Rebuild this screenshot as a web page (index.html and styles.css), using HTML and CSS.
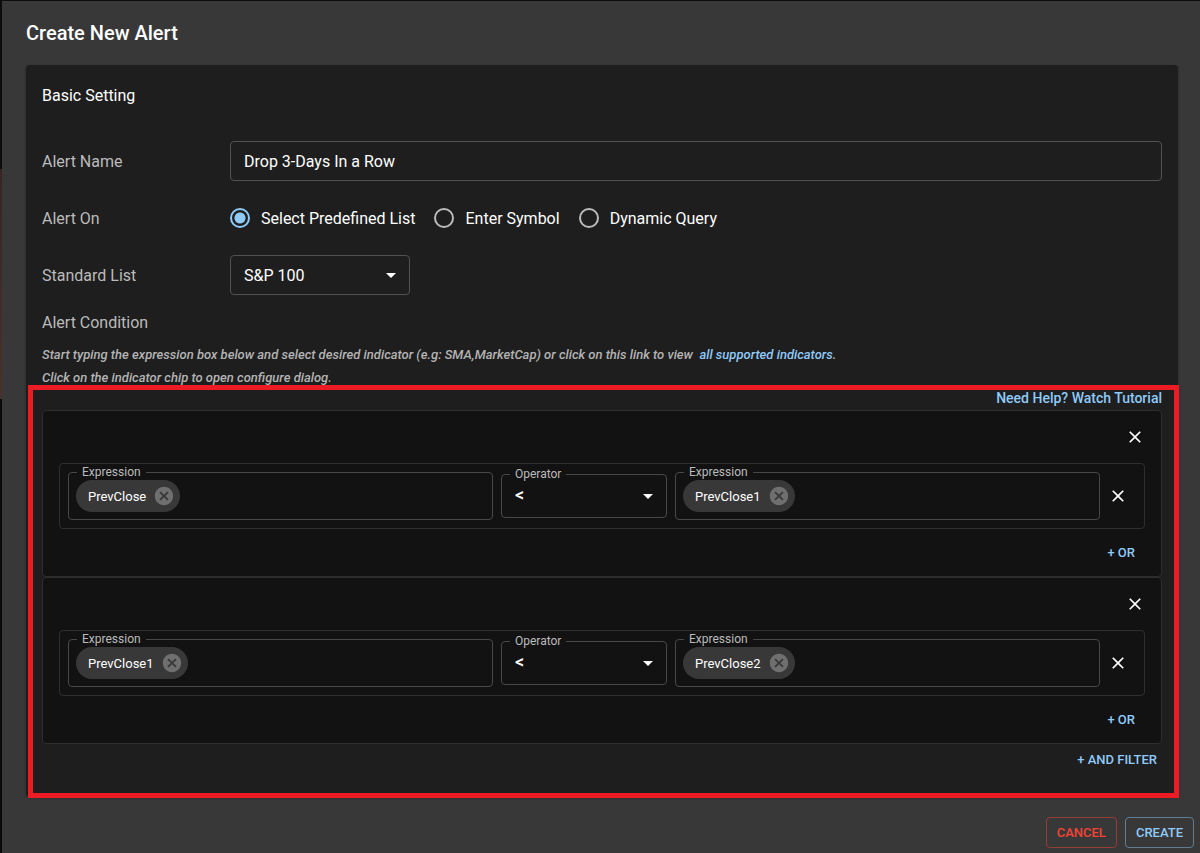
FILE: index.html
```html
<!DOCTYPE html>
<html lang="en">
<head>
  <meta charset="UTF-8" />
  <title>Create New Alert</title>
  <meta name="viewport" content="width=device-width, initial-scale=1.0"/>
  <link rel="stylesheet" href="styles.css">
</head>
<body>
  <form class="dialog">
    <h2 class="dialog-title">Create New Alert</h2>

    <div class="card">
      <h3 class="card-title">Basic Setting</h3>

      <div class="form-row">
        <label class="row-label" for="alertName">Alert Name</label>
        <input class="text-input" id="alertName" type="text" value="Drop 3-Days In a Row">
      </div>

      <div class="form-row radio-row" role="radiogroup" aria-labelledby="alertOn">
        <span class="row-label" id="alertOn">Alert On</span>
        <div class="radios">
          <label class="radio"><input type="radio" name="alertOn" checked>Select Predefined List</label>
          <label class="radio"><input type="radio" name="alertOn">Enter Symbol</label>
          <label class="radio"><input type="radio" name="alertOn">Dynamic Query</label>
        </div>
      </div>

      <div class="form-row">
        <label class="row-label" for="standardList">Standard List</label>
        <div class="select-box">
          <select id="standardList">
            <option>S&amp;P 100</option>
          </select>
          <svg class="arrow" viewBox="0 0 24 24"><path d="M7 10l5 5 5-5z"/></svg>
        </div>
      </div>

      <div class="row-label">Alert Condition</div>
      <p class="hint">Start typing the expression box below and select desired indicator (e.g: SMA,MarketCap) or click on this link to view &nbsp;<a href="#">all supported indicators</a>.<br>Click on the indicator chip to open configure dialog.</p>

      <div class="conditions">
        <a class="tutorial" href="#">Need Help? Watch Tutorial</a>

        <!-- filter 1 -->
        <div class="group">
          <button class="close-btn" type="button" aria-label="Remove filter">
            <svg viewBox="0 0 24 24"><path d="M19 6.41L17.59 5 12 10.59 6.41 5 5 6.41 10.59 12 5 17.59 6.41 19 12 13.41 17.59 19 19 17.59 13.41 12z"/></svg>
          </button>
          <div class="condition">
            <div class="field">
              <label for="left1">Expression</label>
              <span class="chip">PrevClose
                <button type="button" aria-label="Remove PrevClose"><svg viewBox="0 0 24 24"><path d="M12 2C6.47 2 2 6.47 2 12s4.47 10 10 10 10-4.47 10-10S17.53 2 12 2zm5 13.59L15.59 17 12 13.41 8.41 17 7 15.59 10.59 12 7 8.41 8.41 7 12 10.59 15.59 7 17 8.41 13.41 12 17 15.59z"/></svg></button>
              </span>
              <input id="left1" type="text">
            </div>
            <div class="field operator">
              <label for="op1">Operator</label>
              <select id="op1"><option>&lt;</option></select>
              <svg class="arrow" viewBox="0 0 24 24"><path d="M7 10l5 5 5-5z"/></svg>
            </div>
            <div class="field">
              <label for="right1">Expression</label>
              <span class="chip">PrevClose1
                <button type="button" aria-label="Remove PrevClose1"><svg viewBox="0 0 24 24"><path d="M12 2C6.47 2 2 6.47 2 12s4.47 10 10 10 10-4.47 10-10S17.53 2 12 2zm5 13.59L15.59 17 12 13.41 8.41 17 7 15.59 10.59 12 7 8.41 8.41 7 12 10.59 15.59 7 17 8.41 13.41 12 17 15.59z"/></svg></button>
              </span>
              <input id="right1" type="text">
            </div>
            <button class="close-btn" type="button" aria-label="Remove condition">
              <svg viewBox="0 0 24 24"><path d="M19 6.41L17.59 5 12 10.59 6.41 5 5 6.41 10.59 12 5 17.59 6.41 19 12 13.41 17.59 19 19 17.59 13.41 12z"/></svg>
            </button>
          </div>
          <button class="text-btn" type="button">+ OR</button>
        </div>

        <!-- filter 2 -->
        <div class="group">
          <button class="close-btn" type="button" aria-label="Remove filter">
            <svg viewBox="0 0 24 24"><path d="M19 6.41L17.59 5 12 10.59 6.41 5 5 6.41 10.59 12 5 17.59 6.41 19 12 13.41 17.59 19 19 17.59 13.41 12z"/></svg>
          </button>
          <div class="condition">
            <div class="field">
              <label for="left2">Expression</label>
              <span class="chip">PrevClose1
                <button type="button" aria-label="Remove PrevClose1"><svg viewBox="0 0 24 24"><path d="M12 2C6.47 2 2 6.47 2 12s4.47 10 10 10 10-4.47 10-10S17.53 2 12 2zm5 13.59L15.59 17 12 13.41 8.41 17 7 15.59 10.59 12 7 8.41 8.41 7 12 10.59 15.59 7 17 8.41 13.41 12 17 15.59z"/></svg></button>
              </span>
              <input id="left2" type="text">
            </div>
            <div class="field operator">
              <label for="op2">Operator</label>
              <select id="op2"><option>&lt;</option></select>
              <svg class="arrow" viewBox="0 0 24 24"><path d="M7 10l5 5 5-5z"/></svg>
            </div>
            <div class="field">
              <label for="right2">Expression</label>
              <span class="chip">PrevClose2
                <button type="button" aria-label="Remove PrevClose2"><svg viewBox="0 0 24 24"><path d="M12 2C6.47 2 2 6.47 2 12s4.47 10 10 10 10-4.47 10-10S17.53 2 12 2zm5 13.59L15.59 17 12 13.41 8.41 17 7 15.59 10.59 12 7 8.41 8.41 7 12 10.59 15.59 7 17 8.41 13.41 12 17 15.59z"/></svg></button>
              </span>
              <input id="right2" type="text">
            </div>
            <button class="close-btn" type="button" aria-label="Remove condition">
              <svg viewBox="0 0 24 24"><path d="M19 6.41L17.59 5 12 10.59 6.41 5 5 6.41 10.59 12 5 17.59 6.41 19 12 13.41 17.59 19 19 17.59 13.41 12z"/></svg>
            </button>
          </div>
          <button class="text-btn" type="button">+ OR</button>
        </div>

        <button class="text-btn and-btn" type="button">+ AND FILTER</button>
      </div>
    </div>

    <div class="actions">
      <button class="outline-btn cancel" type="button">CANCEL</button>
      <button class="outline-btn" type="submit">CREATE</button>
    </div>
  </form>
</body>
</html>
```

FILE: styles.css
```css
* {
  box-sizing: border-box;
}
body {
  margin: 0;
  padding: 1px 0 0 2px;
  font-family: Roboto, sans-serif;
  font-size: 16px;
  color: #fff;
  background: linear-gradient(#0c0c0c 169px, #3a2420 169px, #4a302b 399px, #0a0a0a 399px);
}
input, select, button {
  font: inherit;
  color: inherit;
}
button {
  display: flex;
  align-items: center;
  padding: 0;
  background: none;
  border: none;
  cursor: pointer;
}
a {
  color: #90caf9;
  text-decoration: none;
}
svg {
  display: block;
  fill: currentColor;
}
.dialog {
  min-height: calc(100vh - 1px);
  background: #383838;
}
.dialog-title {
  margin: 0;
  padding: 16px 24px;
  font-size: 20px;
  line-height: 32px;
  font-weight: 500;
}
.card {
  margin: 0 22px 0 24px;
  padding: 16px 16px 23px;
  background: #1e1e1e;
  border-radius: 4px;
  box-shadow: 0 1px 3px rgba(0,0,0,0.3);
}
.card-title {
  margin: 0 0 30px;
  font-size: 16px;
  line-height: 30px;
  font-weight: 400;
}
.form-row {
  display: grid;
  grid-template-columns: 172px 1fr;
  column-gap: 16px;
  align-items: center;
  margin-bottom: 16px;
}
.row-label {
  color: #bbb;
  line-height: 23px;
}
.text-input {
  width: 100%;
  height: 40px;
  padding: 0 13px;
  background: none;
  border: 1px solid #525252;
  border-radius: 4px;
}
.radio-row {
  min-height: 42px;
}
.radios {
  display: flex;
  gap: 19px;
}
.radio {
  display: flex;
  align-items: center;
  gap: 11px;
}
.radio input {
  appearance: none;
  width: 20px;
  height: 20px;
  margin: 0;
  border: 2px solid #bbb;
  border-radius: 50%;
}
.radio input:checked {
  border-color: #90caf9;
  background: radial-gradient(circle, #90caf9 5px, transparent 6px);
}
.select-box {
  position: relative;
  width: 180px;
}
.select-box select {
  appearance: none;
  width: 100%;
  height: 40px;
  padding: 0 32px 0 13px;
  background: none;
  border: 1px solid #525252;
  border-radius: 4px;
}
.arrow {
  position: absolute;
  top: 50%;
  right: 7px;
  width: 24px;
  height: 24px;
  margin-top: -12px;
  pointer-events: none;
}
.hint {
  margin: 9px 0 0;
  color: #b4b4b4;
  font-size: 13px;
  line-height: 23px;
  font-weight: 500;
  font-style: italic;
}

/* red frame round the whole condition editor */
.conditions {
  position: relative;
  display: flex;
  flex-direction: column;
}
.conditions::after {
  content: "";
  position: absolute;
  inset: -4px -17px -24px -14px;
  border: 5px solid #ed1c24;
  pointer-events: none;
}
.tutorial {
  align-self: flex-end;
  margin-bottom: 2px;
  font-size: 14px;
  line-height: 19px;
  font-weight: 500;
}
.group {
  display: flex;
  flex-direction: column;
  align-items: flex-end;
  padding: 16px 16px 9px;
  background: #121212;
  border: 1px solid #2e2e2e;
  border-radius: 4px;
}
.close-btn svg {
  width: 20px;
  height: 20px;
}
.condition {
  display: flex;
  align-items: center;
  gap: 8px;
  width: 100%;
  margin: 16px 0 8px;
  padding: 8px 16px 8px 8px;
  border: 1px solid #2e2e2e;
  border-radius: 4px;
}
.field {
  position: relative;
  display: flex;
  flex: 1;
  align-items: center;
  min-width: 0;
  height: 48px;
  padding: 0 7px;
  border: 1px solid #484848;
  border-radius: 4px;
}
.field label {
  position: absolute;
  top: -9px;
  left: 8px;
  padding: 0 5px;
  background: #121212;
  color: #bbb;
  font-size: 12px;
  line-height: 16px;
}
.field input {
  flex: 1;
  min-width: 0;
  background: none;
  border: none;
  outline: none;
}
.operator {
  flex: 0 0 166px;
  align-items: flex-start;
  height: 44px;
  padding: 0;
}
.operator select {
  appearance: none;
  width: 100%;
  height: 38px;
  padding: 0 32px 0 13px;
  background: none;
  border: none;
  font-size: 18px;
  font-weight: 500;
}
.operator .arrow {
  right: 6px;
}
.chip {
  display: flex;
  align-items: center;
  gap: 7px;
  height: 32px;
  padding: 0 5px 0 12px;
  background: #383838;
  border-radius: 16px;
  font-size: 13px;
}
.chip button {
  color: #6f6f6f;
}
.chip svg {
  width: 22px;
  height: 22px;
}
.text-btn {
  height: 30px;
  padding: 0 10px;
  color: #90caf9;
  font-size: 13px;
  font-weight: 500;
}
.and-btn {
  align-self: flex-end;
  padding: 0 5px;
}
.actions {
  display: flex;
  justify-content: flex-end;
  gap: 8px;
  padding: 20px 6px 5px;
}
.outline-btn {
  height: 31px;
  padding: 0 10px;
  border: 1px solid #5f7d95;
  border-radius: 4px;
  color: #90caf9;
  font-size: 13px;
  font-weight: 500;
}
.cancel {
  border-color: #953d37;
  color: #f44336;
}
```
